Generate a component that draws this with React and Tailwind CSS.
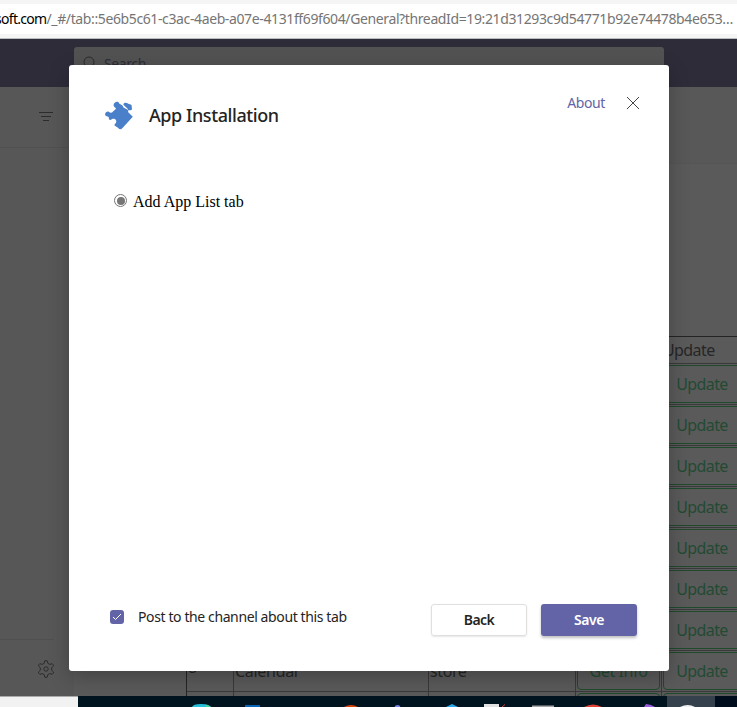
import React from "react";

const SANS = "font-['Noto_Sans',sans-serif]";

function AddressBar() {
  return (
    <div className="h-[39px] shrink-0 border-b border-[#b9bfc0] bg-[#f5f5f5] pt-1">
      <div className="flex h-[30px] items-center overflow-hidden whitespace-nowrap bg-white text-[14px] leading-[30px] text-[#757575]">
        <span className="-ml-[5px] tracking-[-0.42px]">
          <span className="tracking-[-0.7px] text-black">soft.com</span>
          <span className="tracking-[-0.38px]">/_#/tab::5e6b5c61-c3ac-4aeb-a07e-4131ff69f604/General?threadId=19:21d31293c9d54771b92e74478b4e653…</span>
        </span>
      </div>
    </div>
  );
}

function TopBar() {
  return (
    <div className="flex h-12 shrink-0 bg-[#2f2c3a] pl-[74px] pt-2">
      <div className="flex h-8 w-[590px] items-center rounded-[3px] bg-[#525253] pl-[9px] text-[14px] text-[#2d2d36]">
        <svg width="13" height="14" viewBox="0 0 13 14" fill="none" stroke="#2b2b2d">
          <circle cx="6" cy="6" r="5" />
          <path d="M2.5 9.5L0.5 13" />
        </svg>
        <span className="ml-2 tracking-[-0.4px]">Search</span>
      </div>
    </div>
  );
}

function Rail() {
  return (
    <div className="flex w-[74px] shrink-0 flex-col bg-[#575757]">
      <div className="flex h-[61px] justify-end border-b border-[#515151] pr-[21px] pt-[25px]">
        <svg width="14" height="10" viewBox="0 0 14 10" stroke="#2c2c2c">
          <path d="M0 .5H14M2 4.5H12M4 8.5H10" />
        </svg>
      </div>
      <div className="flex-1" />
      <div className="mr-5 flex h-[57px] justify-end border-t border-[#505050] pt-[20px]">
        <svg className="-mr-px" width="18" height="18" viewBox="0 0 18 18" fill="none" stroke="#2c2c2c">
          <path d="M7.2 3.3 7.8.8Q9 .4 10.2.8L10.8 3.3 12.8 4.4 15.2 3.7Q16.2 4.5 16.6 5.8L14.7 7.7V10.3L16.6 12.2Q16.2 13.5 15.2 14.3L12.8 13.6 10.8 14.7 10.2 17.2Q9 17.6 7.8 17.2L7.2 14.7 5.2 13.6 2.8 14.3Q1.8 13.5 1.4 12.2L3.3 10.3V7.7L1.4 5.8Q1.8 4.5 2.8 3.7L5.2 4.4Z" strokeLinejoin="round" />
          <circle cx="9" cy="9" r="2.2" />
        </svg>
      </div>
    </div>
  );
}

function GridButton({ children }) {
  return (
    <div className="m-px flex h-[38px] items-center justify-center rounded-[4px] border border-[#1f4a2c] text-[#234a33]">
      {children}
    </div>
  );
}

function AppTable() {
  const rows = [1, 2, 3, 4, 5, 6, 7, 8, 9];
  const cols = "grid grid-cols-[47px_195px_147px_86px_80px]";
  return (
    <div className="ml-[112px] w-[555px] border-l border-t border-[#242424] text-[16px] leading-5 tracking-[-0.6px] text-[#262626]">
      <div className={cols + " h-[26px]"}>
        <div className="col-start-5 pl-px pt-[3px]">Update</div>
      </div>
      {rows.map((n) => (
        <div key={n} className={cols + " h-[41px] border-t border-[#3b383c]"}>
          <div className="border-r border-[#3b383c] pl-px pt-[6px]">{n === 8 ? "8" : ""}</div>
          <div className="border-r border-[#3b383c] pl-px pt-[10px] tracking-[-0.3px]">{n === 8 ? "Calendar" : ""}</div>
          <div className="border-r border-[#3b383c] pl-px pt-[10px] tracking-[-0.4px]">{n === 8 ? "store" : ""}</div>
          <div className="border-r border-[#3b383c] tracking-[-0.4px]">
            <GridButton>{n === 8 ? "Get Info" : ""}</GridButton>
          </div>
          <div>
            <GridButton>{n < 9 ? "Update" : ""}</GridButton>
          </div>
        </div>
      ))}
    </div>
  );
}

function PuzzleIcon() {
  return (
    <svg width="30" height="30" viewBox="0 0 30 30" fill="#4a80c9">
      <path d="M1 13.500C1.300 11.500 3.500 9.800 5 11 6.500 12.300 8 12 9 10.500L11.800 8C12.500 6.500 9.600 6.500 9.600 4 9.600 1.800 12 .3 13.800 .8 15.200 1.200 14.500 2.600 16 3L18.500 4.500 19.500 6.500 24.500 9.300 24 11 28.800 15.700 18.500 27C17 28.800 15.200 28.500 14.300 27L10.500 24.600C9.800 23.500 12 22.500 12.300 20.800 12.600 18.800 11 17.200 8.800 17.800 7.500 18.200 7 19.300 5.600 18.800 4.200 18.200 5.500 16.500 4.300 15.800 3 15.200 1.200 15.200 1 13.500Z" />
      <path d="M19.300 3.600C19.500 1.500 22.300 1.200 24 2.600 25.200 3.600 26.500 3 27.600 4.200L28 8.500C26.500 10 25.500 8.800 24.200 8.900 23.500 7 21.500 6.200 19.300 3.600Z" />
    </svg>
  );
}

function Dialog() {
  return (
    <div className="absolute left-[69px] top-[65px] flex h-[606px] w-[600px] flex-col rounded-[3px] bg-white text-[#252423] shadow-[0_6px_20px_rgba(0,0,0,0.25)]">
      <div className="flex h-[125px] pl-[35px] pr-[30px] pt-[36px]">
        <PuzzleIcon />
        <h1 className="ml-[15px] mt-px text-[18px] font-medium leading-[26px] tracking-[-0.43px]">App Installation</h1>
        <div className="flex-1" />
        <span className="-mt-[8px] h-5 text-[14px] leading-5 tracking-[-0.4px] text-[#6264a7]">About</span>
        <svg className="-mt-[4px] ml-[22px]" width="12" height="12" viewBox="0 0 12 12" stroke="#484644">
          <path d="M0 0L12 12M12 0L0 12" />
        </svg>
      </div>
      <div className="flex items-center pl-[45px] font-['Liberation_Serif',serif] text-[16px] leading-[22px] text-black">
        <span className="-mt-px mb-px flex size-[13px] items-center justify-center rounded-full border border-[#767676]">
          <span className="size-[8px] rounded-full bg-[#767676]" />
        </span>
        <span className="ml-[6px] mt-px">Add App List tab</span>
      </div>
      <div className="flex-1" />
      <div className="flex h-[67px] pl-[41px] pr-8">
        <span className="mt-[6px] flex size-[14px] items-center justify-center rounded-[3px] bg-[#6264a7]">
          <svg width="10" height="8" viewBox="0 0 10 8" fill="none" stroke="white">
            <path d="M1 4L3.500 6.500 9 1" />
          </svg>
        </span>
        <span className="ml-[14px] mt-[3px] h-5 whitespace-nowrap text-[14px] leading-5 tracking-[-0.39px]">Post to the channel about this tab</span>
        <div className="flex-1" />
        <button className="h-8 w-24 rounded-[3px] border border-[#e1dfdd] pb-[2px] text-[14px] font-semibold tracking-[-0.5px] shadow-[0_1px_2px_rgba(0,0,0,0.1)]">Back</button>
        <button className="ml-[14px] h-8 w-24 rounded-[3px] bg-[#6264a7] pb-[2px] text-[14px] font-semibold tracking-[-0.4px] text-white shadow-[0_2px_3px_rgba(0,0,0,0.25)]">Save</button>
      </div>
    </div>
  );
}

function Taskbar() {
  return (
    <div className="flex h-[11px] shrink-0 bg-[#00141f]">
      <div className="w-[78px] border-t border-[#aaa] bg-[#f2f2f2]" />
      <svg width="659" height="11" viewBox="78 0 659 11">
        <rect x="667" width="48" height="11" fill="#35414c" />
        <rect x="715" width="22" height="11" fill="#000d1c" />
        <path d="M192 11Q193 8 201 8T211 11Z" fill="#24bfd8" />
        <path d="M205 8.500Q209 9 211 11H206Z" fill="#45d49b" />
        <rect x="245" y="9" width="15" height="2" fill="#0865b3" />
        <path d="M344 11Q351 7 358 11Z" fill="#d8430e" />
        <circle cx="397.500" cy="12" r="3" fill="#7b83eb" />
        <path d="M446 11L452 8 458 11Z" fill="#28a8ea" />
        <path d="M484 8H499V11H484Z" fill="#e2e2e2" />
        <path d="M502 11L505 8.500" stroke="#d43d3d" strokeWidth="1" />
        <rect x="532" y="9.500" width="22" height="1.500" fill="#a6a6a6" />
        <path d="M584 11Q593 6 602 11Z" fill="#df4337" />
        <path d="M644 11L646 8 651 9 655 11Z" fill="#9b5de0" />
        <path d="M680 11Q688 7 695 11Z" fill="#f1f1f1" />
      </svg>
    </div>
  );
}

export default function App() {
  return (
    <div className={SANS + " relative flex h-[707px] w-[737px] flex-col overflow-hidden bg-[#575757]"}>
      <AddressBar />
      <div className="flex h-[657px] shrink-0 flex-col overflow-hidden">
        <TopBar />
        <div className="flex min-h-0 flex-1">
          <Rail />
          <div className="min-w-0 flex-1 overflow-hidden bg-[#5a5a5a]">
            <div className="h-[77px] border-b border-[#555] bg-[#585858]" />
            <div className="h-[172px]" />
            <AppTable />
          </div>
        </div>
      </div>
      <Taskbar />
      <Dialog />
    </div>
  );
}
